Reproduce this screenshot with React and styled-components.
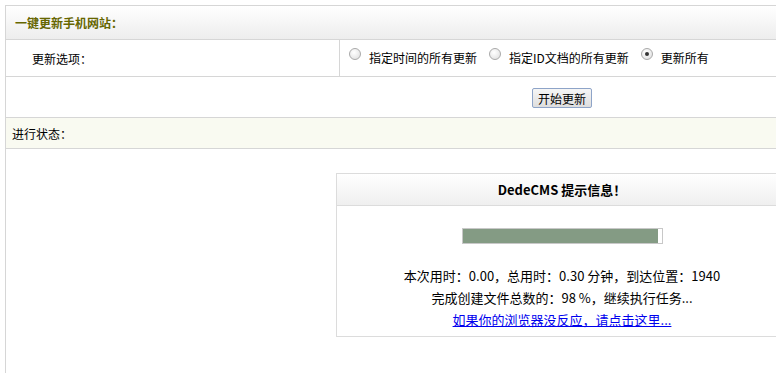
import React from 'react';
import styled, { createGlobalStyle } from 'styled-components';

const GlobalStyle = createGlobalStyle`
  html, body {
    margin: 0;
    padding: 0;
    background: #fff;
    overflow: hidden;
  }
  body {
    font-family: "Noto Sans CJK SC", "Liberation Sans", sans-serif;
    font-size: 12px;
    color: #000;
  }
`;

const Frame = styled.div`
  width: 1114px;
  margin: 5px 0 0 5px;
  border: 1px solid #d6d6d6;
  border-bottom: none;
  box-sizing: border-box;
`;

const HeadRow = styled.div`
  height: 33px;
  display: flex;
  align-items: center;
  padding-left: 9px;
  background: linear-gradient(#ffffff, #ededed);
  border-bottom: 1px solid #d6d6d6;
  color: #666600;
  font-weight: bold;
`;

const OptionRow = styled.div`
  height: 36px;
  display: flex;
  border-bottom: 1px solid #d6d6d6;
`;

const LabelCell = styled.div`
  width: 334px;
  border-right: 1px solid #d6d6d6;
  display: flex;
  align-items: center;
  padding-left: 26px;
  box-sizing: border-box;
`;

const Options = styled.div`
  display: flex;
  align-items: center;
  padding-left: 9px;
  gap: 12px;
  padding-bottom: 2px;
`;

const Option = styled.label`
  display: flex;
  align-items: center;
  gap: 8px;
`;

const Radio = styled.input.attrs({ type: 'radio', name: 'uptype' })`
  appearance: none;
  margin: 0 0 6px 0;
  width: 12px;
  height: 12px;
  border-radius: 50%;
  border: 1px solid #a9a9a9;
  background: radial-gradient(circle at 40% 35%, #ffffff, #dcdcdc);
  box-sizing: border-box;
  position: relative;

  &:checked::after {
    content: '';
    position: absolute;
    left: 3px;
    top: 3px;
    width: 4px;
    height: 4px;
    border-radius: 50%;
    background: #333;
  }
`;

const ButtonRow = styled.div`
  height: 40px;
  display: flex;
  align-items: center;
  justify-content: center;
  border-bottom: 1px solid #d6d6d6;
`;

const Button = styled.button`
  height: 20px;
  width: 60px;
  padding: 0;
  margin-top: 2px;
  font-family: inherit;
  font-size: 12px;
  color: #000;
  border: 1px solid #8ea4c8;
  border-radius: 2px;
  background: linear-gradient(#f6f6f6, #dedede);
`;

const StatusRow = styled.div`
  height: 30px;
  display: flex;
  align-items: center;
  padding-left: 6px;
  background: #f9faf1;
  border-bottom: 1px solid #d6d6d6;
`;

const ResultArea = styled.div`
  height: 230px;
  padding-top: 24px;
  display: flex;
  justify-content: center;
  box-sizing: border-box;
`;

const MsgBox = styled.div`
  width: 450px;
  align-self: flex-start;
  border: 1px solid #dcdcdc;
  font-size: 13px;
`;

const MsgTitle = styled.div`
  height: 31px;
  display: flex;
  align-items: center;
  justify-content: center;
  background: linear-gradient(#ffffff, #efefef);
  border-bottom: 1px solid #dcdcdc;
  font-weight: bold;
`;

const MsgBody = styled.div`
  padding: 22px 0 5px;
  display: flex;
  flex-direction: column;
  align-items: center;
  line-height: 22px;
`;

const Progress = styled.div`
  width: 201px;
  height: 16px;
  border: 1px solid #c8c8c8;
  box-sizing: border-box;
  background: #fff;
  margin-bottom: 21px;
  margin-left: 1px;
`;

const ProgressFill = styled.div`
  height: 100%;
  background: #849b84;
`;

const Link = styled.a`
  color: #0000ee;
  text-decoration: underline;
`;

export default function App() {
  const percent = 98;
  return (
    <>
      <GlobalStyle />
      <Frame>
        <HeadRow>一键更新手机网站：</HeadRow>
        <OptionRow>
          <LabelCell>更新选项：</LabelCell>
          <Options>
            <Option><Radio />指定时间的所有更新</Option>
            <Option><Radio />指定ID文档的所有更新</Option>
            <Option><Radio defaultChecked />更新所有</Option>
          </Options>
        </OptionRow>
        <ButtonRow>
          <Button>开始更新</Button>
        </ButtonRow>
        <StatusRow>进行状态：</StatusRow>
        <ResultArea>
          <MsgBox>
            <MsgTitle>DedeCMS 提示信息！</MsgTitle>
            <MsgBody>
              <Progress>
                <ProgressFill style={{ width: `${percent}%` }} />
              </Progress>
              <div>本次用时：0.00，总用时：0.30 分钟，到达位置：1940</div>
              <div>完成创建文件总数的：{percent} %，继续执行任务...</div>
              <Link href="#">如果你的浏览器没反应，请点击这里...</Link>
            </MsgBody>
          </MsgBox>
        </ResultArea>
      </Frame>
    </>
  );
}
